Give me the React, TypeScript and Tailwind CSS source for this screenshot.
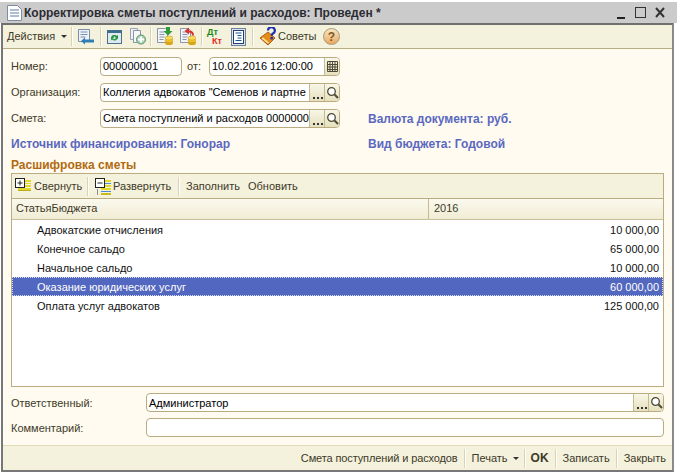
const F = "[font-family:'Liberation_Sans',Arial,sans-serif]";

function Sep({ className }: { className?: string }) {
  return <div className={`w-px h-[19px] bg-[#d9d3b4] border-r border-white box-content shrink-0 ${className ?? "mx-[6px]"}`} />;
}

function Page() {
  return (
    <g>
      <path d="M1.500 1.500h10l4 4v11h-14z" fill="#fff" stroke="#7c8da6" />
      <path d="M4 6h9M4 9h9M4 12h9" stroke="#5b7ca8" />
    </g>
  );
}

function Coins({ x = 9, y = 10 }: { x?: number; y?: number }) {
  return (
    <g>
      <ellipse cx={x + 3} cy={y + 6} rx="4" ry="2" fill="#d9a514" />
      <ellipse cx={x + 3} cy={y + 3.500} rx="4" ry="2" fill="#f1c72e" stroke="#c08f10" strokeWidth=".5" />
      <ellipse cx={x + 3} cy={y + 1} rx="4" ry="2" fill="#f8de60" stroke="#c08f10" strokeWidth=".5" />
    </g>
  );
}

function IconPost() {
  return (
    <svg width="16" height="16" viewBox="0 0 16 16" className="shrink-0">
      <path d="M.5.5h11v12H.5z" fill="#eef3fa" stroke="#7c8da6" />
      <path d="M2.500 3h7M2.500 5.500h7M2.500 8h5" stroke="#7b8fae" />
      <path d="M3 12l4-3.500V10.500h9v3H7V15.500z" fill="#2f7fb5" />
    </svg>
  );
}
function IconRefresh() {
  return (
    <svg width="15" height="14" viewBox="0 0 15 14" className="shrink-0">
      <rect x=".5" y=".5" width="14" height="13" fill="#dfe9ef" stroke="#49708c" />
      <rect x=".5" y=".5" width="14" height="2.500" fill="#3b6d8e" />
      <path d="M4 8a3.500 3.500 0 0 1 6-2l1-1v3.400H7.600L9 7a2.200 2.200 0 0 0-3.600 1z" fill="#1f8a3a" />
      <path d="M11 7.500a3.500 3.500 0 0 1-6 2l-1 1V7h3.400L6 8.500a2.200 2.200 0 0 0 3.600-1z" fill="#27a04a" />
    </svg>
  );
}
function IconCopyAdd() {
  return (
    <svg width="16" height="17" viewBox="0 0 16 17" className="shrink-0">
      <path d="M.5.5h7v11h-7z" fill="#eef0f4" stroke="#9aa4b2" />
      <path d="M3.500 2.500h7v12h-7z" fill="#f6f7fa" stroke="#8a94a4" />
      <circle cx="11" cy="11.500" r="4.500" fill="#a9d6b3" stroke="#5f8f70" />
      <path d="M11 8.500v6M8 11.500h6" stroke="#fff" strokeWidth="2" />
    </svg>
  );
}
function IconDocCoins({ red }: { red?: boolean }) {
  return (
    <svg width="16" height="19" viewBox="0 0 16 19" className="shrink-0">
      <path d="M.5 1.500h8l2 2v12H.5z" fill="#f3f4f8" stroke="#8d97a8" />
      <path d="M2.500 5h5M2.500 7.500h5M2.500 10h5M2.500 12.500h4" stroke="#8895aa" />
      {red ? (
        <path d="M9 .5L4.500 4 9 7.500V5.500c2 0 3 1 3 3h2c0-3.500-2-5-5-5z" fill="#d9322a" />
      ) : (
        <path d="M9 0h4v4h2.500L11 8.500 6.500 4H9z" fill="#2f9a3a" />
      )}
      <Coins x={9} y={10} />
    </svg>
  );
}
function IconList() {
  return (
    <svg width="15" height="18" viewBox="0 0 15 18" className="shrink-0">
      <rect x=".5" y=".5" width="14" height="17" fill="#dfe3ea" stroke="#6f7f95" />
      <rect x="2.500" y="2.500" width="10" height="13" fill="#fff" stroke="#1d3f74" />
      <path d="M4.500 5h6M6.500 7.500h4M6.500 10h4M4.500 12.500h6" stroke="#14589c" />
    </svg>
  );
}
function IconTips() {
  return (
    <svg width="18" height="19" viewBox="0 0 18 19" className="shrink-0">
      <path d="M0 11L8 5l7 6-7 7z" fill="#e98a16" stroke="#8e4a0a" strokeWidth=".8" />
      <path d="M1.500 11.500L8 16.500l1-1L3 10.500z" fill="#fbe7a8" />
      <path d="M8 3.500a3.400 3.400 0 1 1 5 3c-1 .6-1.300 1-1.300 2.300" fill="none" stroke="#1b2fb0" strokeWidth="2.200" />
      <rect x="10.500" y="10" width="2.400" height="2.400" fill="#1b2fb0" />
    </svg>
  );
}
function IconExpand({ minus }: { minus?: boolean }) {
  return (
    <svg width="16" height="17" viewBox="0 0 16 17" className="shrink-0">
      <rect x=".5" y=".5" width="9" height="9" fill="#fff" stroke="#222" />
      <path d="M2.500 5h5" stroke="#222" />
      {!minus && <path d="M5 2.500v5" stroke="#222" />}
      <rect x="10" y="2" width="6" height="2" fill="#e3d92c" />
      <rect x="10" y="5" width="6" height="1" fill={minus ? "#4c8bd0" : "#e3d92c"} />
      <rect x="10" y="7" width="6" height="2" fill="#e3d92c" />
      {!minus && <rect x="3" y="10" width="13" height="2" fill="#e3d92c" />}
      {!minus && <rect x="3" y="12" width="13" height="1" fill="#b9ad1e" />}
      {minus && <rect x="6" y="10" width="10" height="2" fill="#e3d92c" />}
      {minus && <rect x="6" y="13" width="10" height="1" fill="#4c8bd0" />}
      {minus && <rect x="6" y="15" width="10" height="2" fill="#c9bd1e" />}
      {minus && <path d="M2 12h1M2 14h1M2 16h1" stroke="#333" />}
    </svg>
  );
}

function Caret() {
  return <span className="inline-block w-0 h-0 border-x-[3px] border-x-transparent border-t-[3px] border-t-[#333] ml-[5px] shrink-0" />;
}

function Btn({ children }: { children: React.ReactNode }) {
  return (
    <div className="w-[15px] h-full bg-gradient-to-b from-[#f8f6e8] to-[#e6e0bd] border-l border-[#c4bb92] flex items-center justify-center shrink-0">
      {children}
    </div>
  );
}
function Dots() {
  return (
    <Btn>
      <svg width="11" height="13" viewBox="0 0 11 13">
        <path d="M1 11h2v2H1zM5 11h2v2H5zM9 11h2v2H9z" fill="#333" />
      </svg>
    </Btn>
  );
}
function Search() {
  return (
    <Btn>
      <svg width="13" height="13" viewBox="0 0 13 13">
        <circle cx="5.500" cy="5.500" r="3.800" fill="#fff" stroke="#4d4a36" strokeWidth="1.300" />
        <path d="M8.500 8.500L12 12" stroke="#4d4a36" strokeWidth="2" />
      </svg>
    </Btn>
  );
}

function Field({ className, textClass, text, children }: { className?: string; textClass?: string; text?: string; children?: React.ReactNode }) {
  return (
    <div className={`h-[19px] bg-white border border-[#b8ac80] rounded-[4px] flex items-center overflow-hidden ${className ?? ""}`}>
      <span className={`flex-1 min-w-0 pl-[2px] overflow-hidden whitespace-nowrap text-black leading-[17px] ${textClass ?? ""}`}>{text}</span>
      {children}
    </div>
  );
}

function Row({ name, value, selected }: { name: string; value: string; selected?: boolean }) {
  return (
    <div className={`h-[19px] flex items-center justify-between pl-[24px] pr-[3px] pt-[1px] border ${selected ? "bg-[#5267bf] text-white border-dotted border-[#d8dcf0]" : "border-transparent text-[#111]"}`}>
      <span>{name}</span>
      <span>{value}</span>
    </div>
  );
}

export default function App() {
  return (
    <div className={`${F} w-[677px] h-[475px] bg-white flex flex-col text-[11px] text-[#3d3a28] pt-[2px] pb-[3px] px-[1px] overflow-hidden`}>
      <div className="h-[21px] bg-[#cbcbcb] flex items-center pl-[6px] pr-[6px] shrink-0 -mx-[1px]">
        <svg width="17" height="18" viewBox="0 0 17 18" className="shrink-0"><Page /></svg>
        <span className="ml-[1px] font-bold text-[12px] text-[#2b2b33] flex-1">Корректировка сметы поступлений и расходов: Проведен *</span>
        <svg width="52" height="14" viewBox="0 0 52 14" className="mr-[2px]">
          <path d="M0 12h8" stroke="#222" strokeWidth="2" />
          <rect x="18.500" y="1.500" width="10" height="10" fill="none" stroke="#333" />
          <path d="M39 2l8 9M47 2l-8 9" stroke="#333" strokeWidth="2" />
        </svg>
      </div>
      <div className="flex-1 border-2 border-[#777] border-t-[#6f6f6f] border-r-[#8a8a8a] mr-[2px] flex flex-col bg-[#fffbf0] min-h-0">
        <div className="h-[24px] bg-[#f4f1dd] border-b border-[#b8ac80] flex items-center pl-[4px] shrink-0">
          <span className="w-[49px] shrink-0">Действия</span>
          <Caret />
          <Sep className="ml-[4px] mr-[5px]" />
          <IconPost />
          <Sep className="ml-[6px] mr-[5px]" />
          <IconRefresh />
          <span className="w-[8px] shrink-0" />
          <IconCopyAdd />
          <Sep className="ml-[4px] mr-[5px]" />
          <IconDocCoins />
          <span className="w-[7px] shrink-0" />
          <IconDocCoins red />
          <Sep className="ml-[5px] mr-[4px]" />
          <span className="flex flex-col font-bold text-[9px] leading-[9px] w-[17px] shrink-0">
            <span className="text-[#1b8a1b]">Дт</span>
            <span className="text-[#e02a2a] ml-[5px]">Кт</span>
          </span>
          <span className="w-[7px] shrink-0" />
          <IconList />
          <Sep className="ml-[6px] mr-[6px]" />
          <IconTips />
          <span className="w-[37px] shrink-0">Советы</span>
          <div className="ml-[8px] w-[17px] h-[17px] rounded-full bg-gradient-to-b from-[#f8e6c0] to-[#e8a860] border border-[#a89878] flex items-center justify-center font-bold text-[12px] text-[#7a5a28] shrink-0">?</div>
        </div>

        <div className="flex-1 flex flex-col pl-[8px] pr-[6px] pt-[8px] min-h-0">
          <div className="flex items-center h-[19px]">
            <span className="w-[89px]">Номер:</span>
            <Field className="w-[82px]" text="000000001" />
            <span className="ml-[5px] w-[22px]">от:</span>
            <Field className="w-[131px]" text="10.02.2016 12:00:00">
              <Btn>
                <svg width="11" height="11" viewBox="0 0 11 11">
                  <path d="M.5.500h10v10H.5zM.5 3.500h10M.5 6h10M.5 8.500h10M3 .5v10M5.500.5v10M8 .5v10" fill="none" stroke="#4d4a36" />
                </svg>
              </Btn>
            </Field>
          </div>
          <div className="flex items-center h-[19px] mt-[7px]">
            <span className="w-[89px]">Организация:</span>
            <Field className="w-[240px]" text={'Коллегия адвокатов "Семенов и партне'}>
              <Dots /><Search />
            </Field>
          </div>
          <div className="flex items-center h-[19px] mt-[7px]">
            <span className="w-[89px]">Смета:</span>
            <Field className="w-[240px]" text="Смета поступлений и расходов 0000000">
              <Dots /><Search />
            </Field>
            <span className="ml-[28px] font-bold text-[12px] text-[#5a68c0]">Валюта документа: руб.</span>
          </div>
          <div className="flex items-center h-[13px] mt-[9px] font-bold text-[12px] text-[#5a68c0]">
            <span className="w-[357px]">Источник финансирования: Гонорар</span>
            <span>Вид бюджета: Годовой</span>
          </div>
          <div className="h-[13px] mt-[9px] font-bold text-[12px] text-[#b26a10] leading-[13px]">Расшифровка сметы</div>
          <div className="h-[214px] mr-[2px] mt-[1px] border border-[#b8ac80] bg-white flex flex-col shrink-0">
            <div className="h-[25px] bg-[#f4f1dd] border-b border-[#b8ac80] flex items-center pl-[3px] shrink-0">
              <IconExpand />
              <span className="ml-[3px] w-[47px] shrink-0">Свернуть</span>
              <Sep className="mx-[6px]" />
              <IconExpand minus />
              <span className="ml-[2px] w-[59px] shrink-0">Развернуть</span>
              <Sep className="mx-[6px]" />
              <span className="w-[57px] shrink-0">Заполнить</span>
              <span className="ml-[5px]">Обновить</span>
            </div>
            <div className="h-[21px] bg-gradient-to-b from-[#fbf9ee] to-[#f0ecd4] border-b border-[#c9c09a] flex items-center shrink-0">
              <span className="w-[417px] pl-[4px] pb-[1px] h-full flex items-center border-r border-[#c4bb92]">СтатьяБюджета</span>
              <span className="pl-[5px] pb-[1px]">2016</span>
            </div>
            <Row name="Адвокатские отчисления" value="10 000,00" />
            <Row name="Конечное сальдо" value="65 000,00" />
            <Row name="Начальное сальдо" value="10 000,00" />
            <Row name="Оказание юридических услуг" value="60 000,00" selected />
            <Row name="Оплата услуг адвокатов" value="125 000,00" />
          </div>
          <div className="flex items-center h-[19px] mt-[6px] mr-[2px]">
            <span className="w-[135px] pt-[1px]">Ответственный:</span>
            <Field className="flex-1" textClass="pt-[1px]" text="Администратор">
              <Dots /><Search />
            </Field>
          </div>
          <div className="flex items-center h-[19px] mt-[6px] mr-[2px]">
            <span className="w-[135px] pt-[1px]">Комментарий:</span>
            <Field className="flex-1" />
          </div>
        </div>

        <div className="h-[25px] bg-[#f4f1dd] border-t border-[#e0dab8] flex items-center justify-end pr-[6px] shrink-0">
          <span className="tracking-[-0.12px]">Смета поступлений и расходов</span>
          <Sep className="mx-[6px]" />
          <span>Печать</span>
          <Caret />
          <Sep className="mx-[5px]" />
          <span className="font-bold text-[12px]">OK</span>
          <Sep className="mx-[6px]" />
          <span>Записать</span>
          <Sep className="mx-[6px]" />
          <span>Закрыть</span>
        </div>
      </div>
    </div>
  );
}
